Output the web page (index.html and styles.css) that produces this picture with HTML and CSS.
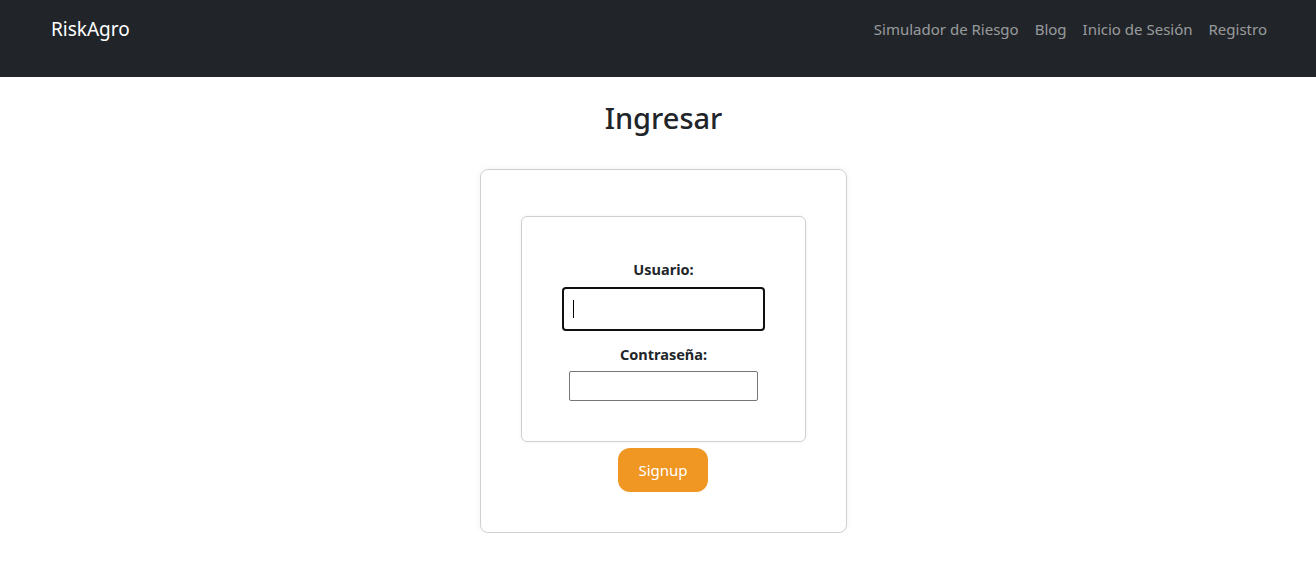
FILE: index.html
```html
<!DOCTYPE html>
<html lang="es">
<head>
<meta charset="utf-8">
<title>RiskAgro - Ingresar</title>
<link rel="stylesheet" href="styles.css">
</head>
<body>
<nav class="navbar">
  <a class="brand" href="#">RiskAgro</a>
  <ul class="nav-links">
    <li><a href="#">Simulador de Riesgo</a></li>
    <li><a href="#">Blog</a></li>
    <li><a href="#">Inicio de Sesión</a></li>
    <li><a href="#">Registro</a></li>
  </ul>
</nav>
<main class="main">
  <h2 class="title">Ingresar</h2>
  <div class="card">
    <form class="form-box">
      <label class="label" for="usuario">Usuario:</label>
      <div class="input-focused"><span class="caret"></span><input id="usuario" class="input-bare" type="text"></div>
      <label class="label label-second" for="pass">Contraseña:</label>
      <input id="pass" class="input" type="password">
    </form>
    <button class="btn" type="button">Signup</button>
  </div>
</main>
</body>
</html>
```
FILE: styles.css
```css
* { box-sizing: border-box; }
html, body { margin: 0; padding: 0; }
body {
  font-family: "Noto Sans", "Open Sans", sans-serif;
  color: #212529;
  background: #fff;
}
.navbar {
  height: 77px;
  background: #212529;
  display: flex;
  justify-content: space-between;
  align-items: flex-start;
  padding: 14px 49px 0 51px;
}
.brand {
  color: #fff;
  text-decoration: none;
  font-size: 19px;
  line-height: 30px;
}
.nav-links {
  list-style: none;
  margin: 0;
  padding: 3px 0 0;
  display: flex;
  gap: 16px;
}
.nav-links a {
  color: rgba(255,255,255,0.55);
  text-decoration: none;
  font-size: 15px;
  line-height: 24px;
}
.main {
  display: flex;
  flex-direction: column;
  align-items: center;
  padding-left: 11px;
}
.title {
  margin: 21px 0 31px;
  font-size: 29px;
  font-weight: 500;
  line-height: 40px;
}
.card {
  width: 367px;
  height: 364px;
  border: 1px solid #d0d0d0;
  border-radius: 8px;
  box-shadow: 0 0 6px rgba(0,0,0,0.06);
  padding: 46px 40px 0;
  display: flex;
  flex-direction: column;
  align-items: center;
}
.form-box {
  width: 285px;
  height: 226px;
  border: 1px solid #cfcfcf;
  border-radius: 6px;
  box-shadow: 0 0 4px rgba(0,0,0,0.05);
  padding: 40px 0 0;
  display: flex;
  flex-direction: column;
  align-items: center;
}
.label {
  font-size: 14.5px;
  font-weight: 700;
  line-height: 24px;
  margin-bottom: 6px;
}
.label-second { margin-top: 11px; margin-bottom: 5px; }
.input-focused {
  width: 203px;
  height: 44px;
  border: 2px solid #101010;
  border-radius: 4px;
  display: flex;
  align-items: center;
  padding-left: 9px;
}
.caret {
  width: 1px;
  height: 18px;
  background: #000;
}
.input-bare {
  border: none;
  outline: none;
  background: transparent;
  flex: 1;
  min-width: 0;
  height: 30px;
}
.input {
  width: 189px;
  height: 30px;
  border: 1px solid #767676;
  border-radius: 2px;
}
.btn {
  margin-top: 6px;
  margin-right: 1px;
  width: 90px;
  height: 44px;
  border: none;
  border-radius: 12px;
  background: #ef9623;
  color: #fff;
  font-family: inherit;
  font-size: 15px;
}
```
